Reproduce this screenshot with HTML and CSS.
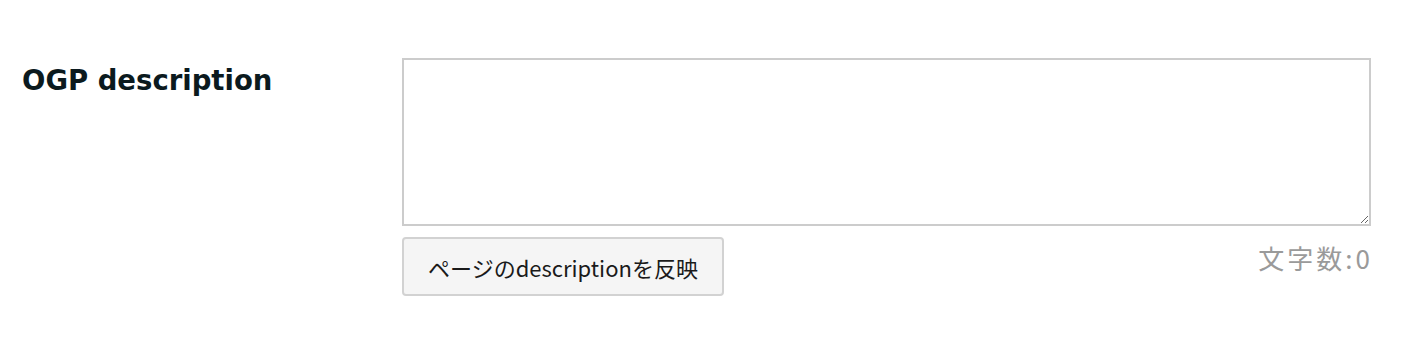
FILE: index.html
```html
<!DOCTYPE html>
<html lang="ja">
<head>
<meta charset="utf-8">
<title>OGP description</title>
<link rel="stylesheet" href="styles.css">
</head>
<body>
<div class="row">
  <div class="label">OGP description</div>
  <div class="field">
    <textarea class="input"></textarea>
    <div class="actions">
      <button class="btn" type="button">ページのdescriptionを反映</button>
      <span class="count">文字数:0</span>
    </div>
  </div>
</div>
</body>
</html>
```

FILE: styles.css
```css
html, body {
  margin: 0;
  padding: 0;
  background: #ffffff;
}
.row {
  display: flex;
  padding-top: 58px;
}
.label {
  width: 380px;
  padding-left: 22px;
  padding-top: 5px;
  font-family: "DejaVu Sans", Verdana, sans-serif;
  font-weight: bold;
  font-size: 27.5px;
  line-height: 34px;
  color: #0b1a1e;
}
.field {
  width: 969px;
  display: flex;
  flex-direction: column;
}
.input {
  box-sizing: border-box;
  width: 969px;
  height: 168px;
  margin: 0;
  border: 2px solid #cccccc;
  border-radius: 0;
  outline: none;
  background: #ffffff;
  display: block;
}
.actions {
  display: flex;
  justify-content: space-between;
  align-items: flex-start;
  margin-top: 11px;
}
.btn {
  box-sizing: border-box;
  width: 322px;
  height: 59px;
  margin: 0;
  padding: 0;
  border: 2px solid #d2d2d2;
  border-radius: 4px;
  background: #f5f5f5;
  color: #1a1a1a;
  font-family: "Noto Sans CJK JP", sans-serif;
  font-size: 22px;
}
.count {
  font-family: "Noto Sans CJK JP", sans-serif;
  font-size: 26px;
  line-height: 32px;
  letter-spacing: 3px;
  color: #9a9a9a;
  padding-top: 5px;
  margin-right: -2px;
}
```
